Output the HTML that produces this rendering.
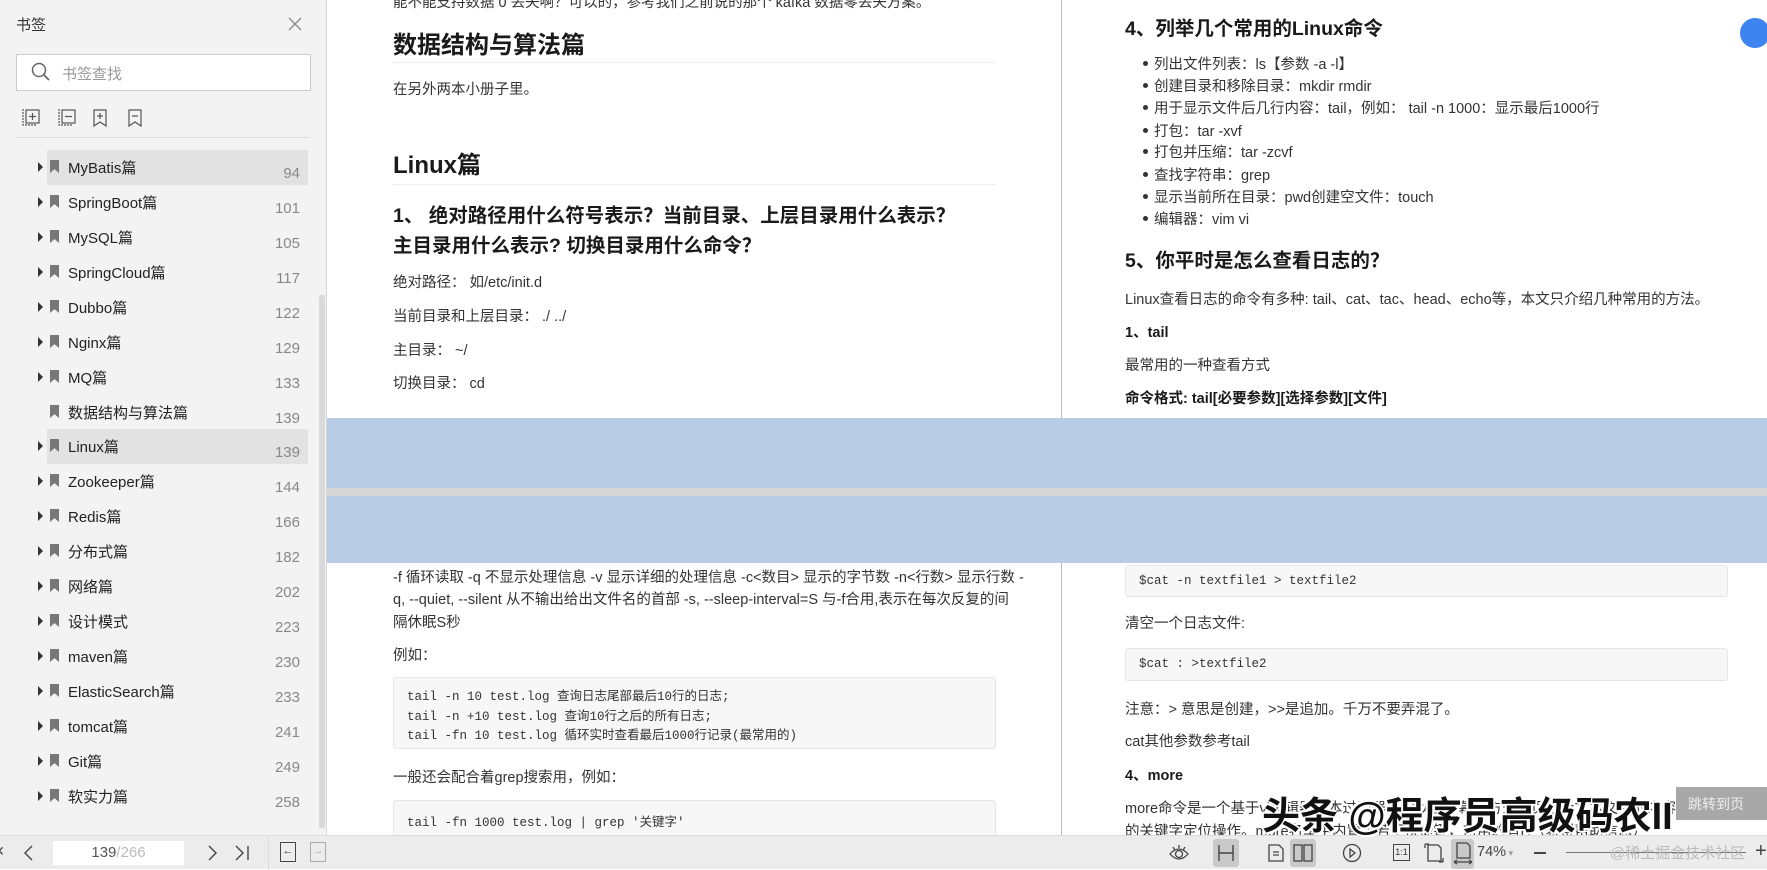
<!DOCTYPE html>
<html><head><meta charset="utf-8"><style>
*{margin:0;padding:0;box-sizing:border-box}
body{width:1767px;height:869px;overflow:hidden;background:#fff;font-family:"Liberation Sans","Noto Sans CJK SC",sans-serif;color:#333;position:relative}
.a{position:absolute;white-space:nowrap}
#side{position:absolute;left:0;top:0;width:327px;height:835px;background:#f3f3f3;border-right:1px solid #d6d6d6}
.item{position:absolute;left:0;width:320px;height:35px;font-size:15px;color:#222}
.item .tri{position:absolute;left:38px;top:12px;width:0;height:0;border-left:5px solid #333;border-top:5px solid transparent;border-bottom:5px solid transparent}
.item .bm{position:absolute;left:50px;top:10px;width:9px;height:13px;background:#777;clip-path:polygon(0 0,100% 0,100% 100%,50% 70%,0 100%)}
.item .t{position:absolute;left:68px;top:7px}
.item .n{position:absolute;right:20px;top:15px;color:#888;font-size:15px}
.hl{background:#e2e2e2}
.p{font-size:14.5px;color:#333}
.h{font-weight:bold;color:#1a1a1a}
.code{position:absolute;background:#f7f7f7;border:1px solid #e6e6e6;border-radius:3px;font-family:"Liberation Mono","Noto Sans CJK SC",monospace;font-size:12.5px;color:#333}
.li{position:absolute;left:1143px;font-size:14.5px;white-space:nowrap}
.li:before{content:"";position:absolute;left:0;top:8px;width:5px;height:5px;border-radius:50%;background:#333}
.li span{margin-left:11px}
#bar{position:absolute;left:0;top:835px;width:1767px;height:34px;background:#ececec;border-top:1px solid #dcdcdc}
.ic{position:absolute;color:#444;font-size:18px}
</style></head><body>

<div id="side">
 <div class="a" style="left:16px;top:14px;font-size:15px;color:#333">书签</div>
 <svg class="a" style="left:288px;top:17px" width="14" height="14"><path d="M1 1L13 13M13 1L1 13" stroke="#888" stroke-width="1.3"/></svg>
 <div class="a" style="left:16px;top:54px;width:295px;height:37px;background:#fff;border:1px solid #ccc"></div>
 <svg class="a" style="left:31px;top:62px" width="20" height="20"><circle cx="8" cy="8" r="6.5" fill="none" stroke="#666" stroke-width="1.5"/><path d="M13 13L18 18" stroke="#666" stroke-width="1.8"/></svg>
 <div class="a" style="left:62px;top:63px;font-size:15px;color:#999">书签查找</div>
 <svg class="a" style="left:22px;top:107px" width="130" height="22" fill="none" stroke="#555" stroke-width="1.2">
  <rect x="4" y="3" width="13" height="13"/><path d="M1 2v16h14" stroke-dasharray="2 1"/><path d="M10.5 6v7M7 9.5h7"/>
  <rect x="40" y="3" width="13" height="13"/><path d="M37 2v16h14" stroke-dasharray="2 1"/><path d="M43 9.5h7"/>
  <path d="M72 3h12v16l-6-4-6 4z"/><path d="M78 6v6M75 9h6"/>
  <path d="M107 3h12v16l-6-4-6 4z"/><path d="M110 9h6"/>
 </svg>
 <div class="a" style="left:16px;top:137px;width:294px;height:1px;background:#ddd"></div>
 <div class="a" style="left:319px;top:295px;width:6px;height:533px;background:#d9d9d9;border-radius:2px"></div>

 <div class="item" style="top:150px"><div class="a hl" style="left:47px;top:0;width:261px;height:35px"></div><i class="tri"></i><i class="bm"></i><span class="t">MyBatis篇</span><span class="n a">94</span></div>
 <div class="item" style="top:185px"><i class="tri"></i><i class="bm"></i><span class="t">SpringBoot篇</span><span class="n a">101</span></div>
 <div class="item" style="top:220px"><i class="tri"></i><i class="bm"></i><span class="t">MySQL篇</span><span class="n a">105</span></div>
 <div class="item" style="top:255px"><i class="tri"></i><i class="bm"></i><span class="t">SpringCloud篇</span><span class="n a">117</span></div>
 <div class="item" style="top:290px"><i class="tri"></i><i class="bm"></i><span class="t">Dubbo篇</span><span class="n a">122</span></div>
 <div class="item" style="top:325px"><i class="tri"></i><i class="bm"></i><span class="t">Nginx篇</span><span class="n a">129</span></div>
 <div class="item" style="top:360px"><i class="tri"></i><i class="bm"></i><span class="t">MQ篇</span><span class="n a">133</span></div>
 <div class="item" style="top:395px"><i class="bm"></i><span class="t">数据结构与算法篇</span><span class="n a">139</span></div>
 <div class="item" style="top:429px"><div class="a hl" style="left:47px;top:0;width:261px;height:35px"></div><i class="tri"></i><i class="bm"></i><span class="t">Linux篇</span><span class="n a">139</span></div>
 <div class="item" style="top:464px"><i class="tri"></i><i class="bm"></i><span class="t">Zookeeper篇</span><span class="n a">144</span></div>
 <div class="item" style="top:499px"><i class="tri"></i><i class="bm"></i><span class="t">Redis篇</span><span class="n a">166</span></div>
 <div class="item" style="top:534px"><i class="tri"></i><i class="bm"></i><span class="t">分布式篇</span><span class="n a">182</span></div>
 <div class="item" style="top:569px"><i class="tri"></i><i class="bm"></i><span class="t">网络篇</span><span class="n a">202</span></div>
 <div class="item" style="top:604px"><i class="tri"></i><i class="bm"></i><span class="t">设计模式</span><span class="n a">223</span></div>
 <div class="item" style="top:639px"><i class="tri"></i><i class="bm"></i><span class="t">maven篇</span><span class="n a">230</span></div>
 <div class="item" style="top:674px"><i class="tri"></i><i class="bm"></i><span class="t">ElasticSearch篇</span><span class="n a">233</span></div>
 <div class="item" style="top:709px"><i class="tri"></i><i class="bm"></i><span class="t">tomcat篇</span><span class="n a">241</span></div>
 <div class="item" style="top:744px"><i class="tri"></i><i class="bm"></i><span class="t">Git篇</span><span class="n a">249</span></div>
 <div class="item" style="top:779px"><i class="tri"></i><i class="bm"></i><span class="t">软实力篇</span><span class="n a">258</span></div>
</div>

<div class="a" style="left:1061px;top:0;width:1px;height:835px;background:#bbb"></div>

<div class="a p" style="left:393px;top:-9px">能不能支持数据 0 丢失啊？可以的，参考我们之前说的那个 kafka 数据零丢失方案。</div>
<div class="a h" style="left:393px;top:25px;font-size:24px">数据结构与算法篇</div>
<div class="a" style="left:393px;top:62px;width:603px;height:1px;background:#eee"></div>
<div class="a p" style="left:393px;top:78px">在另外两本小册子里。</div>
<div class="a h" style="left:393px;top:145px;font-size:24px">Linux篇</div>
<div class="a" style="left:393px;top:184px;width:603px;height:1px;background:#eee"></div>
<div class="a h" style="left:393px;top:199px;font-size:19.5px">1、 绝对路径用什么符号表示？当前目录、上层目录用什么表示？</div>
<div class="a h" style="left:393px;top:229px;font-size:19.5px">主目录用什么表示? 切换目录用什么命令？</div>
<div class="a p" style="left:393px;top:271px">绝对路径： 如/etc/init.d</div>
<div class="a p" style="left:393px;top:305px">当前目录和上层目录： ./ ../</div>
<div class="a p" style="left:393px;top:339px">主目录： ~/</div>
<div class="a p" style="left:393px;top:372px">切换目录： cd</div>

<div class="a p" style="left:393px;top:566px">-f 循环读取 -q 不显示处理信息 -v 显示详细的处理信息 -c&lt;数目&gt; 显示的字节数 -n&lt;行数&gt; 显示行数 -</div>
<div class="a p" style="left:393px;top:588px">q, --quiet, --silent 从不输出给出文件名的首部 -s, --sleep-interval=S 与-f合用,表示在每次反复的间</div>
<div class="a p" style="left:393px;top:611px">隔休眠S秒</div>
<div class="a p" style="left:393px;top:644px">例如：</div>
<div class="code" style="left:393px;top:677px;width:603px;height:72px;padding:10px 13px;line-height:19.5px">tail -n 10 test.log 查询日志尾部最后10行的日志;<br>tail -n +10 test.log 查询10行之后的所有日志;<br>tail -fn 10 test.log 循环实时查看最后1000行记录(最常用的)</div>
<div class="a p" style="left:393px;top:766px">一般还会配合着grep搜索用，例如：</div>
<div class="code" style="left:393px;top:800px;width:603px;height:40px;padding:10px 13px">tail -fn 1000 test.log | grep '关键字'</div>

<div class="a h" style="left:1125px;top:12px;font-size:19.5px">4、列举几个常用的Linux命令</div>
<div class="li" style="top:53px"><span>列出文件列表：ls【参数 -a -l】</span></div>
<div class="li" style="top:75px"><span>创建目录和移除目录：mkdir rmdir</span></div>
<div class="li" style="top:97px"><span>用于显示文件后几行内容：tail，例如： tail -n 1000：显示最后1000行</span></div>
<div class="li" style="top:120px"><span>打包：tar -xvf</span></div>
<div class="li" style="top:141px"><span>打包并压缩：tar -zcvf</span></div>
<div class="li" style="top:164px"><span>查找字符串：grep</span></div>
<div class="li" style="top:186px"><span>显示当前所在目录：pwd创建空文件：touch</span></div>
<div class="li" style="top:208px"><span>编辑器：vim vi</span></div>
<div class="a h" style="left:1125px;top:244px;font-size:19.5px">5、你平时是怎么查看日志的？</div>
<div class="a p" style="left:1125px;top:288px">Linux查看日志的命令有多种: tail、cat、tac、head、echo等，本文只介绍几种常用的方法。</div>
<div class="a p h" style="left:1125px;top:321px">1、tail</div>
<div class="a p" style="left:1125px;top:354px">最常用的一种查看方式</div>
<div class="a p h" style="left:1125px;top:387px">命令格式: tail[必要参数][选择参数][文件]</div>
<div class="code" style="left:1125px;top:565px;width:603px;height:32px;padding:8px 13px">$cat -n textfile1 &gt; textfile2</div>
<div class="a p" style="left:1125px;top:612px">清空一个日志文件:</div>
<div class="code" style="left:1125px;top:648px;width:603px;height:33px;padding:8px 13px">$cat : &gt;textfile2</div>
<div class="a p" style="left:1125px;top:698px">注意：&gt; 意思是创建，&gt;&gt;是追加。千万不要弄混了。</div>
<div class="a p" style="left:1125px;top:730px">cat其他参数参考tail</div>
<div class="a p h" style="left:1125px;top:764px">4、more</div>
<div class="a p" style="left:1125px;top:797px">more命令是一个基于vi编辑器文本过滤器，它以全屏幕的方式按页显示文本文件的内容，支持vi中</div>
<div class="a p" style="left:1125px;top:820px">的关键字定位操作。more名单中内置了若干快捷键，常用的有H（获得帮助信息）</div>
<div class="a" style="left:1676px;top:787px;width:91px;height:33px;background:#a8a8a8;color:#eee;font-size:14px;padding:7px 0 0 12px">跳转到页</div>
<div class="a" style="left:1740px;top:18px;width:30px;height:30px;border-radius:50%;background:#3d84f0"></div>

<div class="a" style="left:327px;top:418px;width:1440px;height:145px;background:#b8cde5"></div>
<div class="a" style="left:327px;top:488px;width:1440px;height:8px;background:#d6d6d6"></div>

<div id="bar">
 <div class="ic" style="left:-2px;top:4px">‹</div>
 <svg class="a" style="left:22px;top:9px" width="12" height="16"><path d="M10 1L3 8l7 7" fill="none" stroke="#444" stroke-width="1.4"/></svg>
 <div class="a" style="left:53px;top:5px;width:131px;height:24px;background:#fff;text-align:center;font-size:15px;line-height:24px;color:#555">139<span style="color:#bbb">/266</span></div>
 <svg class="a" style="left:207px;top:9px" width="12" height="16"><path d="M2 1l7 7-7 7" fill="none" stroke="#444" stroke-width="1.4"/></svg>
 <svg class="a" style="left:234px;top:9px" width="16" height="16"><path d="M2 1l7 7-7 7M14 1v14" fill="none" stroke="#444" stroke-width="1.4"/></svg>
 <div class="a" style="left:268px;top:0;width:1px;height:34px;background:#dcdcdc"></div>
 <div class="a" style="left:280px;top:6px;width:16px;height:20px;border:1.3px solid #444;font-size:11px;text-align:center;line-height:17px">←</div>
 <div class="a" style="left:310px;top:6px;width:16px;height:20px;border:1.3px solid #aaa;color:#aaa;font-size:11px;text-align:center;line-height:17px">→</div>

 <svg class="a" style="left:1168px;top:7px" width="22" height="20" fill="none" stroke="#444" stroke-width="1.3"><path d="M2 11q9-10 18 0q-9 10-18 0z"/><circle cx="11" cy="11" r="3.5"/><path d="M11 2v3M5 4l1.5 2.5M17 4l-1.5 2.5"/></svg>
 <div class="a" style="left:1213px;top:3px;width:26px;height:28px;background:#c9c9c9;border-radius:3px"></div>
 <svg class="a" style="left:1217px;top:8px" width="18" height="18" fill="none" stroke="#444" stroke-width="1.4"><path d="M2 1v16M16 1v16M2 9h14"/></svg>
 <svg class="a" style="left:1268px;top:8px" width="16" height="18" fill="none" stroke="#444" stroke-width="1.3"><path d="M1 1h10l4 4v12H1z"/><path d="M5 8h6M5 11h6"/></svg>
 <div class="a" style="left:1290px;top:3px;width:26px;height:28px;background:#c9c9c9;border-radius:3px"></div>
 <svg class="a" style="left:1293px;top:8px" width="20" height="18" fill="none" stroke="#444" stroke-width="1.3"><rect x="1" y="1" width="8" height="16"/><rect x="11" y="1" width="8" height="16"/></svg>
 <svg class="a" style="left:1342px;top:7px" width="20" height="20" fill="none" stroke="#444" stroke-width="1.3"><circle cx="10" cy="10" r="8.5"/><path d="M8 6l5 4-5 4z"/></svg>
 <div class="a" style="left:1393px;top:8px;width:17px;height:17px;border:1.3px solid #444;font-size:9px;text-align:center;line-height:15px">1:1</div>
 <svg class="a" style="left:1424px;top:7px" width="20" height="20" fill="none" stroke="#444" stroke-width="1.3"><path d="M4 2h10l3 3v13H4z"/><path d="M1 1v4M1 1h4M19 19v-4M19 19h-4"/></svg>
 <div class="a" style="left:1451px;top:3px;width:23px;height:30px;background:#c9c9c9;border-radius:3px"></div>
 <svg class="a" style="left:1453px;top:6px" width="20" height="24" fill="none" stroke="#444" stroke-width="1.3"><path d="M4 1h10l3 3v12H4z"/><path d="M1 20h18M1 20l3-2M1 20l3 2M19 20l-3-2M19 20l-3 2"/></svg>
 <div class="a" style="left:1477px;top:8px;font-size:14.5px;color:#444">74%<span style="font-size:9px;color:#999"> ▾</span></div>
 <div class="a" style="left:1534px;top:16px;width:12px;height:2px;background:#444"></div>
 <div class="a" style="left:1566px;top:16px;width:180px;height:1px;background:#777"></div>
 <div class="a" style="left:1610px;top:6px;font-size:15px;color:#bbb">@稀土掘金技术社区</div>
 <div class="a" style="left:1755px;top:4px;font-size:20px;color:#444">+</div>
</div>

<div class="a" style="left:1262px;top:785px;font-size:38px;font-weight:bold;color:#111;text-shadow:2px 0 #fff,-2px 0 #fff,0 2px #fff,0 -2px #fff,2px 2px #fff,-2px -2px #fff">头条 @程序员高级码农II</div>
</body></html>
